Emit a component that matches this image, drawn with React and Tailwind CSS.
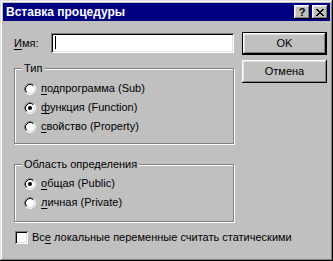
import React from "react";

const raised =
  "shadow-[inset_-1px_-1px_#000,inset_1px_1px_#fff,inset_-2px_-2px_#808080,inset_2px_2px_#dfdfdf]";
const sunken =
  "shadow-[inset_1px_1px_#808080,inset_-1px_-1px_#fff,inset_2px_2px_#000,inset_-2px_-2px_#dfdfdf]";

function Radio({ checked }) {
  return (
    <svg width="12" height="12" viewBox="0 0 12 12" className="shrink-0">
      <circle cx="6" cy="6" r="4.5" fill="#fff" />
      <path d="M2.11 9.89 A5.5 5.5 0 0 1 9.89 2.11" stroke="#808080" fill="none" />
      <path d="M9.89 2.11 A5.5 5.5 0 0 1 2.11 9.89" stroke="#fff" fill="none" />
      <path d="M2.82 9.18 A4.5 4.5 0 0 1 9.18 2.82" stroke="#000" fill="none" />
      <path d="M9.18 2.82 A4.5 4.5 0 0 1 2.82 9.18" stroke="#dfdfdf" fill="none" />
      {checked && <circle cx="6" cy="6" r="2" fill="#000" />}
    </svg>
  );
}

function RadioRow({ checked, u, rest }) {
  return (
    <div className="flex h-[19px] items-center gap-[5px]">
      <Radio checked={checked} />
      <span>
        <span className="underline underline-offset-[2px]">{u}</span>
        {rest}
      </span>
    </div>
  );
}

function Group({ label, className, children }) {
  return (
    <div
      className={
        "relative border border-[#808080] shadow-[inset_1px_1px_#fff,1px_1px_#fff] " +
        className
      }
    >
      <span className="absolute -top-[7px] left-[7px] bg-[#c0c0c0] px-[2px] leading-[13px]">
        {label}
      </span>
      {children}
    </div>
  );
}

export default function App() {
  return (
    <div
      className={
        "w-[333px] h-[261px] bg-[#c0c0c0] p-[3px] text-[11px] leading-[13px] text-black shadow-[inset_-1px_-1px_#000,inset_1px_1px_#dfdfdf,inset_-2px_-2px_#808080,inset_2px_2px_#fff]"
      }
      style={{ fontFamily: '"Liberation Sans", Arial, sans-serif' }}
    >
      {/* title bar */}
      <div className="flex h-[18px] items-center justify-between bg-[#000080] pl-[3px] pr-[2px]">
        <span className="text-[12px] font-bold leading-[14px] text-white">
          Вставка процедуры
        </span>
        <div className="flex gap-[2px]">
          <div
            className={
              "flex h-[14px] w-[16px] items-center justify-center bg-[#c0c0c0] text-[11px] font-bold leading-[11px] " +
              raised
            }
          >
            ?
          </div>
          <div
            className={
              "flex h-[14px] w-[16px] items-center justify-center bg-[#c0c0c0] " +
              raised
            }
          >
            <svg width="8" height="7" viewBox="0 0 8 7" shapeRendering="crispEdges">
              <g fill="#000">
                <rect x="0" y="0" width="2" height="1" />
                <rect x="6" y="0" width="2" height="1" />
                <rect x="1" y="1" width="2" height="1" />
                <rect x="5" y="1" width="2" height="1" />
                <rect x="2" y="2" width="4" height="1" />
                <rect x="3" y="3" width="2" height="1" />
                <rect x="2" y="4" width="4" height="1" />
                <rect x="1" y="5" width="2" height="1" />
                <rect x="5" y="5" width="2" height="1" />
                <rect x="0" y="6" width="2" height="1" />
                <rect x="6" y="6" width="2" height="1" />
              </g>
            </svg>
          </div>
        </div>
      </div>

      {/* body */}
      <div className="flex gap-[8px] pl-[11px] pt-[11px]">
        <div className="flex w-[220px] flex-col pt-[1px]">
          <div className="flex h-[20px] items-center">
            <span className="w-[37px]">
              <span className="underline underline-offset-[2px]">И</span>мя:
            </span>
            <div className={"relative h-[20px] w-[183px] bg-white " + sunken}>
              <div className="absolute left-[4px] top-[3px] h-[13px] w-[1px] bg-black" />
            </div>
          </div>

          <Group label="Тип" className="mt-[15px] pb-[7px] pl-[9px] pt-[10px]">
            <RadioRow u="п" rest="одпрограмма (Sub)" />
            <RadioRow checked u="ф" rest="ункция (Function)" />
            <RadioRow u="с" rest="войство (Property)" />
          </Group>

          <Group
            label="Область определения"
            className="mt-[20px] pb-[9px] pl-[9px] pt-[9px]"
          >
            <RadioRow checked u="о" rest="бщая (Public)" />
            <RadioRow u="л" rest="ичная (Private)" />
          </Group>

          <div className="mt-[9px] flex h-[13px] items-center gap-[4px] pl-[1px]">
            <div className={"h-[13px] w-[13px] shrink-0 bg-white " + sunken} />
            <span className="whitespace-nowrap">
              Вс<span className="underline underline-offset-[2px]">е</span> локальные
              переменные считать статическими
            </span>
          </div>
        </div>

        <div className="flex w-[85px] flex-col gap-[5px]">
          <div className="border border-black">
            <div
              className={
                "flex h-[21px] items-center justify-center bg-[#c0c0c0] " + raised
              }
            >
              OK
            </div>
          </div>
          <div
            className={
              "flex h-[23px] items-center justify-center bg-[#c0c0c0] " + raised
            }
          >
            Отмена
          </div>
        </div>
      </div>
    </div>
  );
}
